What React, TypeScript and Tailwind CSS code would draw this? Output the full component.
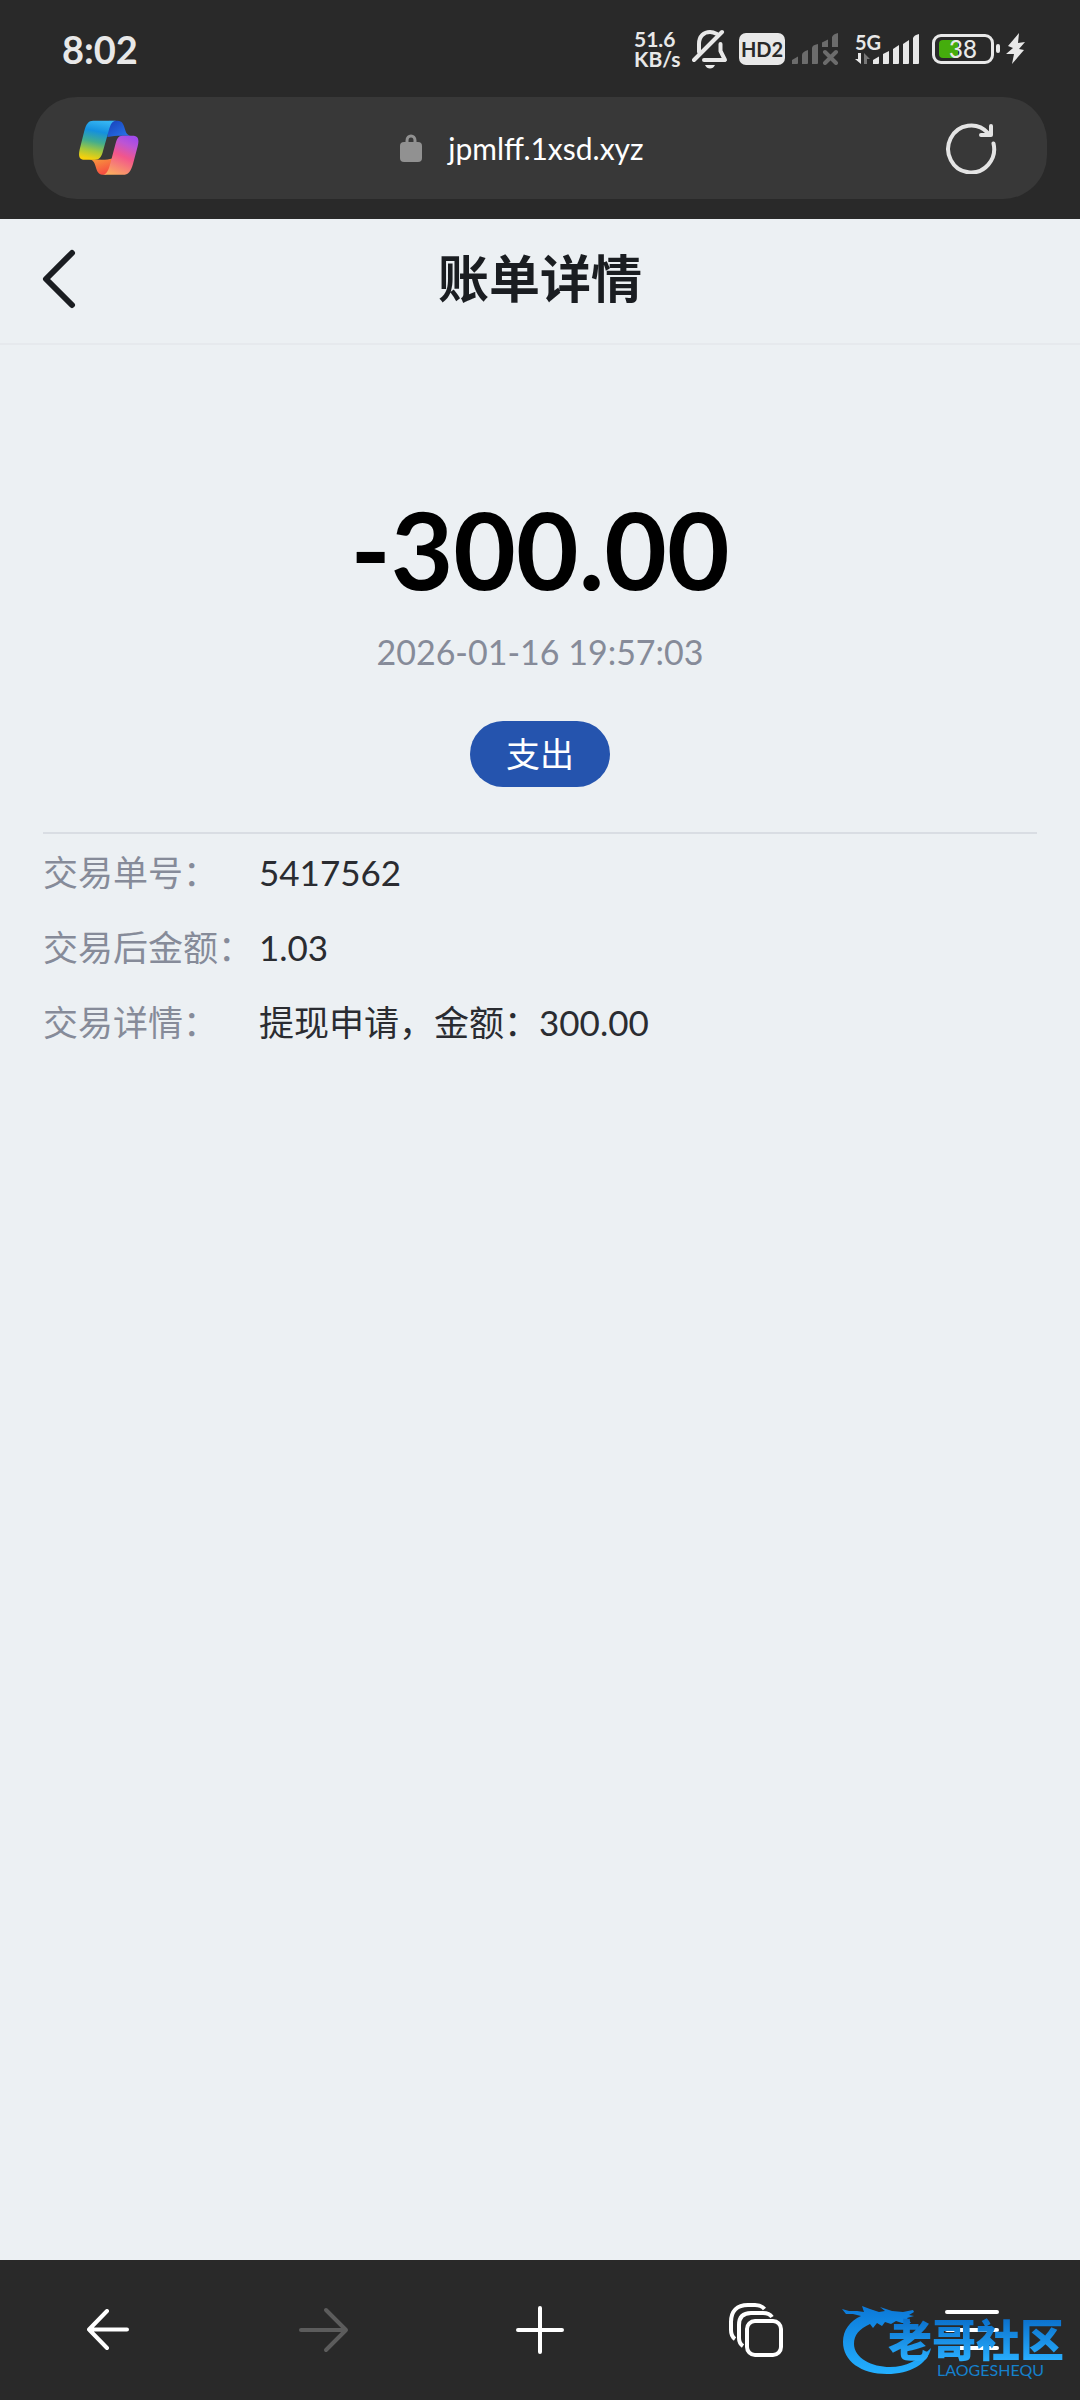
import type { ReactNode } from 'react'

interface DetailRowProps {
  label: string
  children: ReactNode
}

const details = [
  { label: '交易单号：', value: '5417562' },
  { label: '交易后金额：', value: '1.03' },
  { label: '交易详情：', value: '提现申请，金额：300.00' },
]

function MutedBell() {
  return (
    <svg width="36" height="40" viewBox="0 0 36 40" fill="none" stroke="#e8e8e8" strokeWidth="4" strokeLinecap="round" strokeLinejoin="round">
      <path d="M7 23V15C7 7 12 3 18 3C21 3 23 4 25 5" />
      <path d="M28.500 15V22L33 31H12" />
      <path d="M2 31L30 3" />
      <path d="M13 36H23C22 38.500 20 39.500 18 39.500S14 38.500 13 36Z" fill="#e8e8e8" stroke="none" />
    </svg>
  )
}

function NoSignal() {
  return (
    <svg width="48" height="32" viewBox="0 0 48 32" fill="#6c6c6c">
      <path d="M0 31V27L6 23.500V30Q6 31 5 31Z" />
      <path d="M10 31V22Q10 19 16 17V30Q16 31 15 31H10Z" />
      <path d="M20 31V15Q20 12 26 11V30Q26 31 25 31Z" />
      <path d="M30 14V9.500L36 6.500V14Z" />
      <path d="M40 14V4Q41 1 46 0V14Z" />
      <path d="M33 19L44 30M44 19L33 30" stroke="#6c6c6c" strokeWidth="4" strokeLinecap="round" />
    </svg>
  )
}

function Signal5G() {
  return (
    <div className="flex h-8 items-end">
      <div className="flex flex-col items-start">
        <span className="h-4 w-4 text-[20px] leading-4 font-bold">5G</span>
        <svg width="18" height="15" viewBox="0 0 18 15">
          <path d="M6 3V14L0 9H3V3Z" fill="#e8e8e8" />
          <path d="M9 14V3L15 9H12V14Z" fill="#777" />
        </svg>
      </div>
      <svg width="47" height="31" viewBox="0 0 47 31" fill="#e8e8e8">
        <path d="M0 30V26L6 22.500V29Q6 30 5 30H1Z" />
        <path d="M10 30V20L16 17V29Q16 30 15 30H11Z" />
        <path d="M20 30V15L26 11V29Q26 30 25 30H21Z" />
        <path d="M30 30V10L36 6V29Q36 30 35 30H31Z" />
        <path d="M40 30V4Q41 1 46 0V29Q46 30 45 30H41Z" />
      </svg>
    </div>
  )
}

function Battery() {
  return (
    <div className="flex items-center">
      <div className="relative flex h-[30px] w-[62px] items-center justify-center rounded-[9px] border-3 border-[#e8e8e8]">
        <div className="absolute top-[3px] left-1 h-[18px] w-[19px] rounded-l-[4px] bg-[#45ad0d]" />
        <span className="relative text-[24px] leading-6 font-medium">38</span>
      </div>
      <div className="ml-[2px] h-[9px] w-1 rounded-full bg-[#e8e8e8]" />
    </div>
  )
}

function StatusBar() {
  return (
    <div className="flex h-[97px] items-center justify-between pr-[54px] pl-[62px] text-[#e8e8e8]">
      <span className="text-[38px] leading-10 font-bold">8:02</span>
      <div className="flex items-center">
        <div className="mr-[10px] flex w-[48px] flex-col text-[21px] leading-5 font-bold">
          <span>51.6</span>
          <span>KB/s</span>
        </div>
        <MutedBell />
        <span className="mr-[7px] ml-[11px] flex h-8 w-[46px] items-center justify-center rounded-[7px] bg-[#e8e8e8] text-[20px] leading-5 font-bold text-[#292929]">
          HD2
        </span>
        <NoSignal />
        <div className="mr-3 ml-[15px]">
          <Signal5G />
        </div>
        <Battery />
        <svg className="ml-[6px]" width="20" height="32" viewBox="0 0 20 32" fill="#e8e8e8">
          <path d="M13 0L2 13L7 15L0 21L8 21L6 31L18 17L13 16L19 9L12 10Z" />
        </svg>
      </div>
    </div>
  )
}

function CopilotLogo() {
  return (
    <svg width="60" height="56" viewBox="59 59 182 167">
      <defs>
        <linearGradient id="ribbon-left" x1="0.6" y1="0" x2="0.4" y2="1">
          <stop offset="0" stopColor="#35b5f2" />
          <stop offset="0.28" stopColor="#1490df" />
          <stop offset="0.55" stopColor="#42ad8e" />
          <stop offset="0.78" stopColor="#a4c83c" />
          <stop offset="1" stopColor="#f6d00c" />
        </linearGradient>
        <linearGradient id="ribbon-right" x1="0.7" y1="0" x2="0.3" y2="1">
          <stop offset="0" stopColor="#a24bea" />
          <stop offset="0.2" stopColor="#bd55d3" />
          <stop offset="0.5" stopColor="#f2568b" />
          <stop offset="1" stopColor="#fbaa60" />
        </linearGradient>
        <linearGradient id="fold-top" x1="0" y1="0" x2="1" y2="1">
          <stop offset="0" stopColor="#1740b8" />
          <stop offset="1" stopColor="#2a78ee" />
        </linearGradient>
        <linearGradient id="fold-bottom" x1="0" y1="0" x2="0.5" y2="1">
          <stop offset="0" stopColor="#f7a13d" />
          <stop offset="1" stopColor="#f64d41" />
        </linearGradient>
      </defs>
      <path d="M150 60H176C190 60 194 71 198 84C202 98 206 104 216 105H188C172 105 160 106 145 109Z" fill="url(#fold-top)" />
      <path d="M90 177C104 179 107 190 111 204C115 218 121 224 134 224C152 224 155 205 160 174C150 177 142 178 128 178Z" fill="url(#fold-bottom)" />
      <path d="M102 60H172C157 60 153 76 147 98L132 151C127 170 122 178 107 178H76C61 178 56 169 61 147L75 91C81 69 88 60 102 60Z" fill="url(#ribbon-left)" />
      <path d="M191 105H221C237 105 243 114 237 137L223 190C216 213 209 224 192 224H130C145 223 149 208 155 186L169 133C174 113 178 105 191 105Z" fill="url(#ribbon-right)" />
    </svg>
  )
}

function AddressBar() {
  return (
    <div className="mx-[33px] mb-5 flex h-[102px] items-center justify-between rounded-[44px] bg-[#383838] pr-[50px] pl-[46px]">
      <button type="button" aria-label="Copilot">
        <CopilotLogo />
      </button>
      <div className="mr-10 flex items-center gap-[26px] text-white">
        <svg width="22" height="28" viewBox="0 0 22 28">
          <rect x="0" y="8" width="22" height="20" rx="4" fill="#919191" />
          <path d="M7 9V6.500C7 0.500 15 0.500 15 6.500V9" fill="none" stroke="#919191" strokeWidth="3" />
        </svg>
        <span className="text-[30px] leading-10">jpmlff.1xsd.xyz</span>
      </div>
      <button type="button" aria-label="刷新">
        <svg width="52" height="52" viewBox="0 0 52 52" fill="none" stroke="#e4e4e4" strokeWidth="4" strokeLinecap="round" strokeLinejoin="round">
          <path d="M48.500 21.500A23 23.500 0 1 1 43 11" />
          <path d="M46 4V13H36" />
        </svg>
      </button>
    </div>
  )
}

function DetailRow({ label, children }: DetailRowProps) {
  return (
    <div className="flex h-[75px] items-center text-[35px] leading-[50px]">
      <dt className="w-[216px] shrink-0 whitespace-nowrap text-[#868b99]">{label}</dt>
      <dd className="text-[#2a2c31]">{children}</dd>
    </div>
  )
}

function Watermark() {
  return (
    <div className="pointer-events-none absolute top-[40px] right-[16px] flex h-[80px] w-[222px] justify-end">
      <svg className="absolute top-0 left-0" width="92" height="76" viewBox="0 0 92 76">
        <defs>
          <linearGradient id="dragon" x1="0" y1="0" x2="0" y2="1">
            <stop offset="0" stopColor="#0b78d8" />
            <stop offset="1" stopColor="#24b0ff" />
          </linearGradient>
        </defs>
        <path
          d="M0 9L7 11L15 11L22 12L20 6L28 9L37 12L43 11L38 7L50 11L61 12L71 10L72 12L67 15L72 16L65 18L69 23L60 23L54 21L49 24L43 22L40 26L35 23L31 28L28 24C17 29 12 35 12 44C12 58 30 67 48 67C64 67 77 60 89 48C86 64 68 74 45 74C19 74 1 61 1 42C1 30 8 21 19 16L11 14L4 14Z"
          fill="url(#dragon)"
        />
      </svg>
      <div className="relative mt-[18px] flex flex-col items-end">
        <span className="bg-linear-to-b from-[#0b6fcb] to-[#2ab0ff] bg-clip-text text-[44px] leading-11 font-black whitespace-nowrap text-transparent">
          老哥社区
        </span>
        <span className="mr-5 text-[16px] leading-4 text-[#1580cc]">LAOGESHEQU</span>
      </div>
    </div>
  )
}

function BrowserNav() {
  return (
    <nav className="relative grid h-[140px] grid-cols-5 bg-[#292929]">
      <button type="button" aria-label="后退" className="flex items-center justify-center">
        <svg width="42" height="42" viewBox="0 0 42 42" fill="none" stroke="#fff" strokeWidth="4" strokeLinecap="round" strokeLinejoin="round">
          <path d="M20 2L2 20.500L20 39M2 20.500H40" />
        </svg>
      </button>
      <button type="button" aria-label="前进" disabled className="flex items-center justify-center">
        <svg width="50" height="46" viewBox="0 0 50 46" fill="none" stroke="#5c5c5c" strokeWidth="4" strokeLinecap="round" strokeLinejoin="round">
          <path d="M27 3L47 23L27 43M47 23H2" />
        </svg>
      </button>
      <button type="button" aria-label="新建标签页" className="flex items-center justify-center">
        <svg width="48" height="48" viewBox="0 0 48 48" stroke="#fff" strokeWidth="4" strokeLinecap="round">
          <path d="M24 2V46M2 24H46" />
        </svg>
      </button>
      <button type="button" aria-label="标签页" className="flex items-center justify-center">
        <svg width="54" height="54" viewBox="0 0 54 54" fill="none" stroke="#fff" strokeWidth="4">
          <rect x="18" y="18" width="34" height="34" rx="8" />
          <path d="M14 43C11 41 10 39 10 35V22C10 14 14 10 22 10H34C38 10 41 11 43 14" />
          <path d="M6 36C3 34 2 31 2 27V19C2 8 8 2 19 2H26C31 2 33 3 35.500 6" />
        </svg>
      </button>
      <button type="button" aria-label="菜单" className="flex items-center justify-center">
        <svg width="54" height="40" viewBox="0 0 54 40" stroke="#fff" strokeWidth="4" strokeLinecap="round">
          <path d="M2 2H52M2 20H52M2 38H52" />
        </svg>
      </button>
      <Watermark />
    </nav>
  )
}

export default function App() {
  return (
    <div className="flex min-h-screen flex-col bg-[#ecf0f3] font-[Lato,'Noto_Sans_CJK_SC',sans-serif]">
      <header className="bg-[#292929]">
        <StatusBar />
        <AddressBar />
      </header>

      <div className="grid h-[126px] grid-cols-[1fr_auto_1fr] items-center border-b-2 border-[#e6e9ed] px-[42px] pb-1">
        <button type="button" aria-label="返回" className="justify-self-start">
          <svg width="34" height="60" viewBox="0 0 34 60" fill="none" stroke="#1a1d21" strokeWidth="6" strokeLinecap="round" strokeLinejoin="round">
            <path d="M30 4L4 30L30 56" />
          </svg>
        </button>
        <h1 className="text-[51px] leading-[60px] font-bold text-[#1a1d21]">账单详情</h1>
      </div>

      <main className="flex-1 px-[43px]">
        <section className="flex flex-col items-center border-b-2 border-[#d9dde3] pt-[143px] pb-[45px]">
          <p className="text-[108px] leading-[120px] font-bold text-black">-300.00</p>
          <time className="mt-5 text-[34px] leading-[48px] text-[#868b99]">2026-01-16 19:57:03</time>
          <span className="mt-[45px] flex h-[66px] w-[140px] items-center justify-center rounded-full bg-[#2554ae] text-[34px] leading-[40px] text-white">
            支出
          </span>
        </section>
        <dl>
          {details.map((item) => (
            <DetailRow key={item.label} label={item.label}>
              {item.value}
            </DetailRow>
          ))}
        </dl>
      </main>

      <BrowserNav />
    </div>
  )
}
